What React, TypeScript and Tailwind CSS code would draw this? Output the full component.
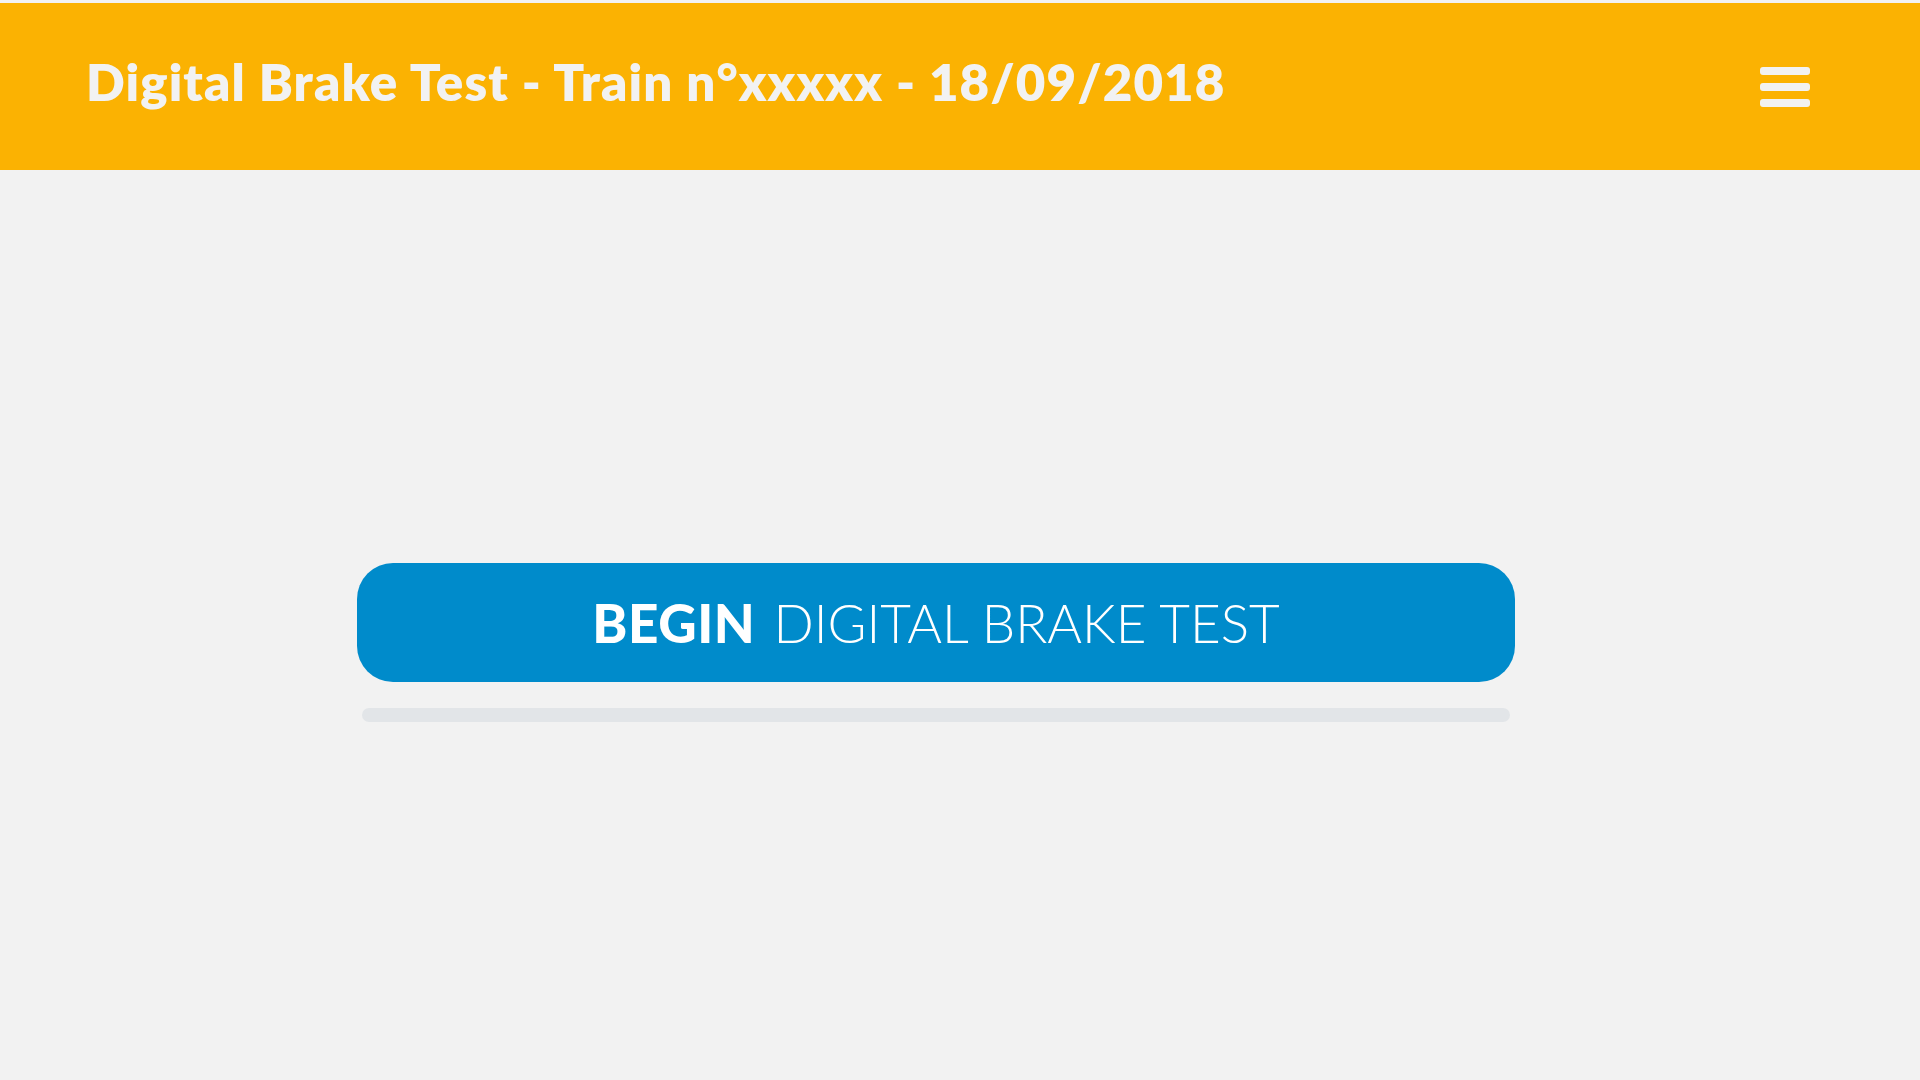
import React from "react";

export default function App() {
  return (
    <div className="w-[1920px] h-[1080px] bg-[#f2f2f2] overflow-hidden" style={{ fontFamily: "Lato, 'Open Sans', sans-serif" }}>
      <header className="mt-[3px] h-[167px] bg-[#fbb202] flex items-center justify-between pl-[86px] pr-[110px]">
        <h1 className="text-[51px] font-extrabold text-[#f2f2f2] leading-none tracking-[1.1px] pb-[10px]">
          Digital Brake Test - Train n°xxxxx - 18/09/2018
        </h1>
        <button className="flex flex-col gap-[8px] w-[50px]" aria-label="menu">
          <span className="block h-[8px] w-[50px] rounded-[3px] bg-[#f2f2f2]" />
          <span className="block h-[8px] w-[50px] rounded-[3px] bg-[#f2f2f2]" />
          <span className="block h-[8px] w-[50px] rounded-[3px] bg-[#f2f2f2]" />
        </button>
      </header>
      <main className="flex flex-col items-center pt-[393px] pr-[48px]">
        <button className="w-[1158px] h-[119px] rounded-[36px] bg-[#008bcb] flex items-center justify-center text-white text-[53px] leading-none pb-[1px]">
          <span className="font-black mr-[18px] tracking-[0.6px]">BEGIN</span>
          <span className="font-light">DIGITAL BRAKE TEST</span>
        </button>
        <div className="mt-[26px] w-[1148px] h-[14px] rounded-full bg-[#e2e5e8]" />
      </main>
    </div>
  );
}
